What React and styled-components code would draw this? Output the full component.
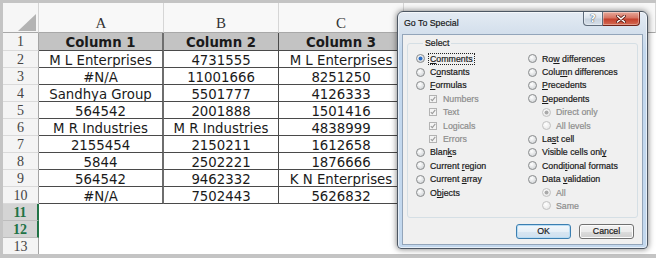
import React from "react";
import styled, { createGlobalStyle } from "styled-components";

const GlobalStyle = createGlobalStyle`
  * { box-sizing: border-box; }
  html, body { margin: 0; padding: 0; background: #c4c4c4; }
  body { width: 656px; height: 258px; overflow: hidden; }
`;

const Frame = styled.div`
  position: relative;
  width: 656px;
  height: 258px;
  padding: 3px 0 4px 3px;
  background: #c4c4c4;
  overflow: hidden;
`;

const Sheet = styled.div`
  display: grid;
  grid-template-columns: 36px 125px 115px 125px 252px;
  grid-template-rows: 30px 18px repeat(12, 17px);
  height: 251px;
  overflow: hidden;
  background: #fff;
`;

const Corner = styled.div`
  background: #f6f6f6;
  border-right: 1px solid #d4d4d4;
  border-bottom: 1px solid #a8a8a8;
`;

const ColHead = styled.div`
  padding-top: 13px;
  text-align: center;
  background: #f8f8f8;
  border-right: 1px solid #d6d6d6;
  border-bottom: 1px solid #a8a8a8;
  font-family: "Liberation Serif", "DejaVu Serif", serif;
  font-size: 15px;
  line-height: 15px;
  color: #333;
`;

const RowHead = styled.div`
  display: flex;
  align-items: center;
  justify-content: center;
  padding-top: 1px;
  background: ${(p) => (p.$selected ? "#d4d4d4" : "#f4f4f4")};
  border-bottom: 1px solid ${(p) => (p.$selected ? "#bdbdbd" : "#dadada")};
  border-right: ${(p) => (p.$selected ? "2px solid #217346" : "1px solid #a4a4a4")};
  font-family: "Liberation Serif", "DejaVu Serif", serif;
  font-size: 14px;
  font-weight: ${(p) => (p.$selected ? "bold" : "normal")};
  color: ${(p) => (p.$selected ? "#217346" : "#444")};
`;

const Cell = styled.div`
  display: flex;
  align-items: center;
  justify-content: center;
  padding-top: 2px;
  overflow: hidden;
  white-space: nowrap;
  background: ${(p) => (p.$band ? "#c3c3c3" : "#fff")};
  border-bottom: 1px solid #4a4a4a;
  border-right: ${(p) => (p.$thick ? "2px solid #6e6e6e" : "1px solid #4a4a4a")};
  font-family: "DejaVu Sans", Verdana, sans-serif;
  font-size: 13.3px;
  font-weight: ${(p) => (p.$band ? "bold" : "normal")};
  color: #1a1a1a;
`;

const Blank = styled.div`
  background: #fff;
`;

/* dialog */

const Dialog = styled.div`
  position: absolute;
  left: 397px;
  top: 11px;
  width: 251px;
  height: 238px;
  display: flex;
  flex-direction: column;
  padding: 0 4px 3px 4px;
  border: 1px solid #4d5763;
  border-radius: 6px 6px 4px 4px;
  background: linear-gradient(to bottom, #e4ebf3 0px, #d3dfec 22px, #c3d8ee 40px, #c3d8ee 100%);
  box-shadow: 0 0 6px rgba(0, 0, 0, 0.55), inset 0 0 0 1px rgba(255, 255, 255, 0.6);
  font-family: "Liberation Sans", Arial, sans-serif;
  font-size: 8.8px;
  color: #1a1a1a;
  -webkit-text-stroke: 0.2px currentColor;
`;

const TitleBar = styled.div`
  height: 22px;
  display: flex;
  align-items: flex-start;
  flex: none;
`;

const Title = styled.span`
  align-self: center;
  margin-left: 2px;
  line-height: 11px;
`;

const Captions = styled.div`
  margin-left: auto;
  margin-right: 3px;
  display: flex;
`;

const CaptionButton = styled.div`
  height: 14px;
  width: ${(p) => (p.$close ? "37px" : "20px")};
  display: flex;
  align-items: center;
  justify-content: center;
  border: 1px solid ${(p) => (p.$close ? "#6e2218" : "#5f6c7b")};
  border-top: none;
  border-left: ${(p) => (p.$close ? "none" : "")};
  border-radius: ${(p) => (p.$close ? "0 0 4px 0" : "0 0 0 4px")};
  background: ${(p) =>
    p.$close
      ? "linear-gradient(to bottom, #e7a899 0%, #d77563 45%, #c4412d 55%, #d46a52 100%)"
      : "linear-gradient(to bottom, #f0f4f8 0%, #dbe3ec 45%, #c8d3df 55%, #d6dfe9 100%)"};
  box-shadow: inset 0 0 0 1px rgba(255, 255, 255, 0.35);
  font-family: "DejaVu Sans", sans-serif;
  font-size: 10px;
  font-weight: bold;
  color: #fff;
  -webkit-text-stroke: 0;
  text-shadow: 0 0 1px #3c4856, 0 0 1px #3c4856;
`;

const Client = styled.div`
  flex: 1;
  display: flex;
  flex-direction: column;
  background: #f0f0f0;
  border: 1px solid #93a5ba;
`;

const Group = styled.fieldset`
  margin: 3px 4px 0 4px;
  padding: 3px 0 4px 8px;
  border: 1px solid #d5dfe5;
  border-radius: 3px;
  min-width: 0;
`;

const Legend = styled.legend`
  margin-left: 7px;
  padding: 0 2px;
  line-height: 11px;
`;

const Columns = styled.div`
  display: grid;
  grid-template-columns: 112px 1fr;
`;

const Column = styled.div`
  display: flex;
  flex-direction: column;
`;

const Option = styled.div`
  height: 13.4px;
  display: flex;
  align-items: center;
  padding-left: ${(p) => p.$indent || 0}px;
  color: ${(p) => (p.$disabled ? "#8d8d8d" : "#1a1a1a")};
  white-space: nowrap;
`;

const Label = styled.span`
  line-height: 10px;
  padding: 0 1px;
  margin-left: -1px;
  border: 1px dotted ${(p) => (p.$focus ? "#222" : "transparent")};
`;

const Buttons = styled.div`
  display: flex;
  justify-content: flex-end;
  gap: 8px;
  margin-top: 6px;
  padding-right: 8px;
`;

const Button = styled.div`
  width: 55px;
  height: 15px;
  display: flex;
  align-items: center;
  justify-content: center;
  border: 1px solid ${(p) => (p.$default ? "#3c7fb1" : "#707070")};
  border-radius: 3px;
  background: ${(p) =>
    p.$default
      ? "linear-gradient(to bottom, #f3f8fc 0%, #e6eff7 50%, #d8e6f2 51%, #cfe0ef 100%)"
      : "linear-gradient(to bottom, #f2f2f2 0%, #ebebeb 50%, #dddddd 51%, #cfcfcf 100%)"};
  box-shadow: inset 0 0 0 1px ${(p) => (p.$default ? "#b8dcf4" : "#fcfcfc")};
  color: #1a1a1a;
`;

function Radio({ checked, disabled }) {
  const ring = disabled ? "#c2c2c2" : "#8a8c8e";
  return (
    <svg width="9" height="9" viewBox="0 0 9 9" style={{ flex: "none", marginRight: 4 }}>
      <defs>
        <radialGradient id={disabled ? "rgd" : "rg"} cx="40%" cy="35%" r="70%">
          <stop offset="0%" stopColor="#ffffff" />
          <stop offset="100%" stopColor={disabled ? "#e6e6e6" : "#cfd2d5"} />
        </radialGradient>
      </defs>
      <circle cx="4.5" cy="4.5" r="4" fill={`url(#${disabled ? "rgd" : "rg"})`} stroke={ring} strokeWidth="1" />
      {checked && <circle cx="4.5" cy="4.5" r="2" fill={disabled ? "#a9a9a9" : "#2b6ec6"} />}
    </svg>
  );
}

function Check() {
  return (
    <svg width="8" height="8" viewBox="0 0 8 8" style={{ flex: "none", marginRight: 5 }}>
      <rect x="0.5" y="0.5" width="7" height="7" fill="#f4f4f4" stroke="#b3b3b3" />
      <path d="M1.8 4.1 L3.3 5.6 L6.3 1.9" fill="none" stroke="#9b9b9b" strokeWidth="1.1" />
    </svg>
  );
}

function Item({ kind = "radio", indent, checked, disabled, focus, children }) {
  return (
    <Option $indent={indent} $disabled={disabled}>
      {kind === "check" ? <Check /> : <Radio checked={checked} disabled={disabled} />}
      <Label $focus={focus}>{children}</Label>
    </Option>
  );
}

const rows = [
  ["Column 1", "Column 2", "Column 3"],
  ["M L Enterprises", "4731555", "M L Enterprises"],
  ["#N/A", "11001666", "8251250"],
  ["Sandhya Group", "5501777", "4126333"],
  ["564542", "2001888", "1501416"],
  ["M R Industries", "M R Industries", "4838999"],
  ["2155454", "2150211", "1612658"],
  ["5844", "2502221", "1876666"],
  ["564542", "9462332", "K N Enterprises"],
  ["#N/A", "7502443", "5626832"],
  null,
  null,
  null,
];

export default function App() {
  return (
    <Frame>
      <GlobalStyle />
      <Sheet>
        <Corner>
          <svg width="35" height="29" viewBox="0 0 35 29">
            <polygon points="15,28 33,28 33,11" fill="#b3b3b3" />
          </svg>
        </Corner>
        {["A", "B", "C", ""].map((c, i) => (
          <ColHead key={i}>{c}</ColHead>
        ))}
        {rows.map((r, i) => (
          <React.Fragment key={i}>
            <RowHead $selected={i === 10 || i === 11}>{i + 1}</RowHead>
            {r
              ? r.map((v, j) => (
                  <Cell key={j} $band={i === 0} $thick={j === 0}>
                    {v}
                  </Cell>
                ))
              : [0, 1, 2].map((j) => <Blank key={j} />)}
            <Blank />
          </React.Fragment>
        ))}
      </Sheet>

      <Dialog>
        <TitleBar>
          <Title>Go To Special</Title>
          <Captions>
            <CaptionButton>?</CaptionButton>
            <CaptionButton $close>
              <svg width="10" height="8" viewBox="0 0 10 8">
                <path d="M1.5 1 L8.5 7 M8.5 1 L1.5 7" stroke="#5a1b12" strokeWidth="3" strokeLinecap="round" />
                <path d="M1.5 1 L8.5 7 M8.5 1 L1.5 7" stroke="#fff" strokeWidth="1.6" strokeLinecap="round" />
              </svg>
            </CaptionButton>
          </Captions>
        </TitleBar>
        <Client>
          <Group>
            <Legend>Select</Legend>
            <Columns>
              <Column>
                <Item checked focus><u>C</u>omments</Item>
                <Item>C<u>o</u>nstants</Item>
                <Item><u>F</u>ormulas</Item>
                <Item kind="check" indent={13} disabled>Numbers</Item>
                <Item kind="check" indent={13} disabled>Text</Item>
                <Item kind="check" indent={13} disabled>Logicals</Item>
                <Item kind="check" indent={13} disabled>Errors</Item>
                <Item>Blan<u>k</u>s</Item>
                <Item>Current <u>r</u>egion</Item>
                <Item>Current <u>a</u>rray</Item>
                <Item>O<u>b</u>jects</Item>
              </Column>
              <Column>
                <Item>Ro<u>w</u> differences</Item>
                <Item>Colu<u>m</u>n differences</Item>
                <Item><u>P</u>recedents</Item>
                <Item><u>D</u>ependents</Item>
                <Item indent={14} checked disabled>Direct only</Item>
                <Item indent={14} disabled>All levels</Item>
                <Item>La<u>s</u>t cell</Item>
                <Item>Visible cells onl<u>y</u></Item>
                <Item>Condi<u>t</u>ional formats</Item>
                <Item>Data <u>v</u>alidation</Item>
                <Item indent={14} checked disabled>All</Item>
                <Item indent={14} disabled>Same</Item>
              </Column>
            </Columns>
          </Group>
          <Buttons>
            <Button $default>OK</Button>
            <Button>Cancel</Button>
          </Buttons>
        </Client>
      </Dialog>
    </Frame>
  );
}
